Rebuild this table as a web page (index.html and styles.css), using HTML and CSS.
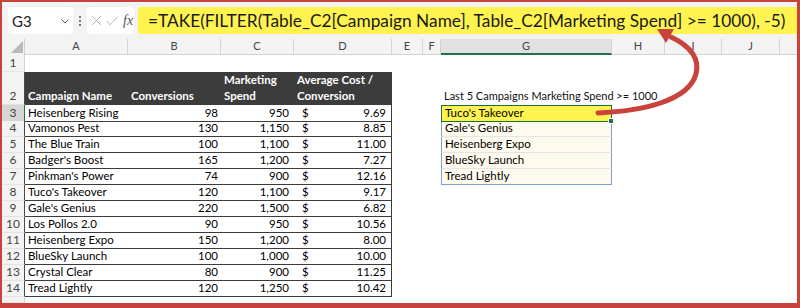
FILE: index.html
```html
<!DOCTYPE html>
<html>
<head>
<meta charset="utf-8">
<link rel="stylesheet" href="styles.css">
</head>
<body>
<div class="frame">
  <div class="fbar">
    <div class="namebox">
      <span class="nb-text">G3</span>
      <svg class="chev" width="8" height="5" viewBox="0 0 8 5"><path d="M0.5 0.5 L4 4 L7.5 0.5" fill="none" stroke="#555" stroke-width="1"/></svg>
    </div>
    <div class="dots"><i></i><i></i><i></i></div>
    <div class="fxbox">
      <svg width="11" height="11" viewBox="0 0 11 11"><path d="M1 1 L10 10 M10 1 L1 10" stroke="#b5b5b5" stroke-width="1" fill="none"/></svg>
      <svg width="12" height="10" viewBox="0 0 12 10"><path d="M0.7 5 L4.2 8.8 L11.3 0.8" stroke="#b5b5b5" stroke-width="1" fill="none"/></svg>
      <span class="fx">fx</span>
    </div>
    <div class="formula">=TAKE(FILTER(Table_C2[Campaign Name], Table_C2[Marketing Spend] &gt;= 1000), -5)</div>
  </div>

  <div class="sheet">
    <div class="row hdr">
      <div class="corner"><svg width="12" height="12" viewBox="0 0 12 12"><polygon points="12,0 12,12 0,12" fill="#b9b9b9"/></svg></div>
      <div class="ch">A</div><div class="ch">B</div><div class="ch">C</div><div class="ch">D</div>
      <div class="ch">E</div><div class="ch">F</div><div class="ch chsel">G</div><div class="ch">H</div>
      <div class="ch">I</div><div class="ch">J</div><div class="ch chk"></div>
    </div>

    <div class="row r1"><div class="c rh">1</div></div>

    <div class="row r2">
      <div class="c rh rht">2</div>
      <div class="c th">Campaign Name</div>
      <div class="c th">Conversions</div>
      <div class="c th">Marketing<br>Spend</div>
      <div class="c th">Average Cost /<br>Conversion</div>
      <div class="c"></div><div class="c"></div>
      <div class="c lbl">Last 5 Campaigns Marketing Spend &gt;= 1000</div>
    </div>

    <div class="row r16">
      <div class="c rh rhsel">3</div>
      <div class="c t">Heisenberg Rising</div><div class="c t num">98</div><div class="c t num cc">950</div>
      <div class="c t dc"><span>$</span><span>9.69</span></div>
      <div class="c"></div><div class="c"></div>
      <div class="c sp sel">Tuco's Takeover<span class="handle"></span></div>
    </div>
    <div class="row r16">
      <div class="c rh rht">4</div>
      <div class="c t">Vamonos Pest</div><div class="c t num">130</div><div class="c t num cc">1,150</div>
      <div class="c t dc"><span>$</span><span>8.85</span></div>
      <div class="c"></div><div class="c"></div>
      <div class="c sp">Gale's Genius</div>
    </div>
    <div class="row r16">
      <div class="c rh rht">5</div>
      <div class="c t">The Blue Train</div><div class="c t num">100</div><div class="c t num cc">1,100</div>
      <div class="c t dc"><span>$</span><span>11.00</span></div>
      <div class="c"></div><div class="c"></div>
      <div class="c sp">Heisenberg Expo</div>
    </div>
    <div class="row r16">
      <div class="c rh rht">6</div>
      <div class="c t">Badger's Boost</div><div class="c t num">165</div><div class="c t num cc">1,200</div>
      <div class="c t dc"><span>$</span><span>7.27</span></div>
      <div class="c"></div><div class="c"></div>
      <div class="c sp">BlueSky Launch</div>
    </div>
    <div class="row r16">
      <div class="c rh rht">7</div>
      <div class="c t">Pinkman's Power</div><div class="c t num">74</div><div class="c t num cc">900</div>
      <div class="c t dc"><span>$</span><span>12.16</span></div>
      <div class="c"></div><div class="c"></div>
      <div class="c sp splast">Tread Lightly</div>
    </div>
    <div class="row r16">
      <div class="c rh rht">8</div>
      <div class="c t">Tuco's Takeover</div><div class="c t num">120</div><div class="c t num cc">1,100</div>
      <div class="c t dc"><span>$</span><span>9.17</span></div>
    </div>
    <div class="row r16">
      <div class="c rh rht">9</div>
      <div class="c t">Gale's Genius</div><div class="c t num">220</div><div class="c t num cc">1,500</div>
      <div class="c t dc"><span>$</span><span>6.82</span></div>
    </div>
    <div class="row r16">
      <div class="c rh rht">10</div>
      <div class="c t">Los Pollos 2.0</div><div class="c t num">90</div><div class="c t num cc">950</div>
      <div class="c t dc"><span>$</span><span>10.56</span></div>
    </div>
    <div class="row r16">
      <div class="c rh rht">11</div>
      <div class="c t">Heisenberg Expo</div><div class="c t num">150</div><div class="c t num cc">1,200</div>
      <div class="c t dc"><span>$</span><span>8.00</span></div>
    </div>
    <div class="row r16">
      <div class="c rh rht">12</div>
      <div class="c t">BlueSky Launch</div><div class="c t num">100</div><div class="c t num cc">1,000</div>
      <div class="c t dc"><span>$</span><span>10.00</span></div>
    </div>
    <div class="row r16">
      <div class="c rh rht">13</div>
      <div class="c t">Crystal Clear</div><div class="c t num">80</div><div class="c t num cc">900</div>
      <div class="c t dc"><span>$</span><span>11.25</span></div>
    </div>
    <div class="row r16">
      <div class="c rh rht">14</div>
      <div class="c t">Tread Lightly</div><div class="c t num">120</div><div class="c t num cc">1,250</div>
      <div class="c t dc"><span>$</span><span>10.42</span></div>
    </div>
    <div class="row r15"><div class="c rh r15h"></div></div>
  </div>

  <svg class="arrow" width="800" height="308" viewBox="0 0 800 308">
    <path d="M598 113 C 640 111, 688 102, 696 74 C 700 58, 690 46, 671 37" fill="none" stroke="#c9423c" stroke-width="5" stroke-linecap="round"/>
    <polygon points="657,29 674,29 666,43" fill="#c9423c"/>
  </svg>
</div>
</body>
</html>
```

FILE: styles.css
```css
html, body {
  margin: 0;
  padding: 0;
  background: #fff;
}

.frame {
  position: relative;
  width: 800px;
  height: 308px;
  box-sizing: border-box;
  border: 2px solid #c8423d;
  border-right-width: 3px;
  border-bottom-width: 5px;
  overflow: hidden;
  background: #fff;
  display: flex;
  flex-direction: column;
  font-family: Lato, "Liberation Sans", sans-serif;
}

/* formula bar */
.fbar {
  height: 37px;
  flex: none;
  background: #f3f3f3;
  display: flex;
  align-items: center;
  padding-left: 6px;
}

.namebox {
  width: 65px;
  height: 27px;
  box-sizing: border-box;
  background: #fff;
  border-radius: 4px;
  display: flex;
  align-items: center;
  justify-content: space-between;
  padding: 0 4px 0 4px;
}

.nb-text {
  font-size: 15px;
  color: #222;
}

.chev {
  margin-top: 1px;
}

.dots {
  width: 14px;
  display: flex;
  flex-direction: column;
  align-items: center;
  gap: 2px;
}

.dots i {
  display: block;
  width: 2px;
  height: 2px;
  background: #777;
}

.fxbox {
  width: 47px;
  height: 27px;
  box-sizing: border-box;
  background: #fff;
  border-radius: 4px;
  display: flex;
  align-items: center;
  padding-left: 4px;
  gap: 4px;
}

.fx {
  font-family: "Liberation Serif", serif;
  font-style: italic;
  font-size: 14px;
  color: #555;
  margin-left: 1px;
}

.formula {
  flex: 1;
  height: 27px;
  margin-left: 4px;
  background: #fff34f;
  border-radius: 3px 0 0 3px;
  display: flex;
  align-items: center;
  padding-left: 10px;
  font-size: 17.3px;
  color: #1a1a1a;
  white-space: nowrap;
}

/* grid */
.sheet {
  flex: 1;
  display: flex;
  flex-direction: column;
}

.row {
  display: grid;
  grid-template-columns: 23px 103px 93px 73px 98px 31px 18px 171px 53px 57px 58px 1fr;
  flex: none;
}

.hdr { height: 15px; }
.r1 { height: 18px; }
.r2 { height: 33px; }
.r16 { height: 16px; }
.r15 { flex: 1; }

.corner {
  background: #f3f3f3;
  border-right: 1px solid #d0d0d0;
  border-bottom: 1px solid #d0d0d0;
  box-sizing: border-box;
  display: flex;
  align-items: flex-end;
  justify-content: flex-end;
  padding: 0 1px 1px 0;
}

.ch {
  background: #f3f3f3;
  border-right: 1px solid #d3d3d3;
  border-bottom: 1px solid #d3d3d3;
  box-sizing: border-box;
  font-size: 11px;
  line-height: 14px;
  color: #444;
  text-align: center;
}

.chsel {
  background: #e1e1e1;
  border-bottom: 2px solid #217346;
}

.chk { border-right: none; }

.c {
  box-sizing: border-box;
  display: flex;
  align-items: flex-end;
  padding: 0 3px 1px 3px;
  font-size: 11.5px;
  line-height: 14px;
  color: #000;
  white-space: nowrap;
  min-width: 0;
}

.rh {
  justify-content: center;
  padding: 0 0 1px 0;
  background: #f3f3f3;
  color: #444;
  font-size: 12px;
  border-right: 1px solid #d3d3d3;
  border-bottom: 1px solid #e4e4e4;
}

.rht { border-right-color: #4a4a4a; }

.rhsel {
  background: #d6d6d6;
  border-right: 1px solid #217346;
}

.th {
  background: #3c3c3c;
  color: #fff;
  font-weight: 700;
  line-height: 16px;
  padding-bottom: 1px;
}

.lbl {
  overflow: visible;
  padding-left: 3px;
  padding-bottom: 2px;
  color: #111;
  font-size: 11px;
}

.t { border-bottom: 1px solid #3b3b3b; }

.num { justify-content: flex-end; }
.cc { padding-right: 5px; }

.dc {
  justify-content: space-between;
  padding: 0 5px 1px 8px;
  border-right: 1px solid #3b3b3b;
}

.sp {
  background: #fffaee;
  border-left: 1px solid #7c9fd6;
  border-right: 1px solid #7c9fd6;
  border-bottom: 1px solid #e2e5ec;
  padding-left: 3px;
}

.splast { border-bottom-color: #7c9fd6; }

.sel {
  position: relative;
  background: #fff34f;
  border: 1px solid #1f6b3a;
}

.handle {
  position: absolute;
  right: -3px;
  bottom: -3px;
  width: 4px;
  height: 4px;
  background: #217346;
  border: 1px solid #fff;
}

.arrow {
  position: absolute;
  left: -2px;
  top: -2px;
  pointer-events: none;
}
```
